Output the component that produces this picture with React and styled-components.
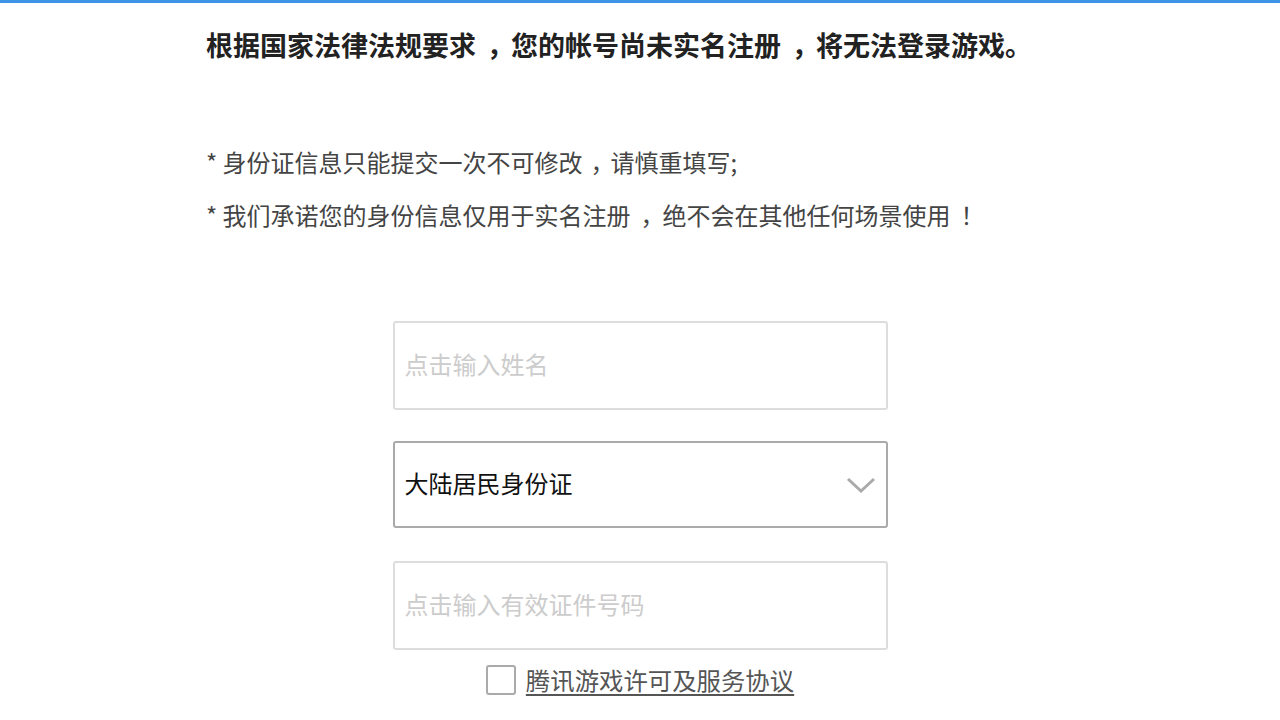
import React from "react";
import styled, { createGlobalStyle } from "styled-components";

const GlobalStyle = createGlobalStyle`
  html, body {
    margin: 0;
    padding: 0;
    background: #fff;
    font-family: "Noto Sans CJK SC", "Noto Sans", sans-serif;
    text-spacing-trim: space-all;
  }
`;

const TopBar = styled.div`
  height: 3px;
  background-color: #3d94e4;
`;

const Page = styled.div`
  width: 868px;
  margin: 0 auto;
  padding-top: 23px;
`;

const Title = styled.h1`
  margin: 0;
  font-size: 27px;
  font-weight: 700;
  line-height: 38px;
  color: #222;
`;

/* full-width punctuation, nudged to sit centred like the reference */
const Punct = styled.span`
  margin-left: calc(${(p) => p.$pad || 4}px + 0.25em);
  margin-right: ${(p) => p.$pad || 4}px;
  letter-spacing: -0.25em;
`;

const Notes = styled.div`
  margin-top: 80px;
  display: flex;
  flex-direction: column;
  gap: 18px;
`;

const Note = styled.p`
  margin: 0;
  font-size: 24px;
  line-height: 35px;
  color: #444;
`;

const Form = styled.div`
  margin-top: 89px;
  display: flex;
  flex-direction: column;
  align-items: center;
`;

const Field = styled.div`
  box-sizing: border-box;
  width: 495px;
  height: ${(p) => (p.$select ? "87px" : "89px")};
  margin-bottom: ${(p) => p.$gap || "0"};
  border: 2px solid ${(p) => (p.$select ? "#aaa" : "#ddd")};
  border-radius: 3px;
  display: flex;
  align-items: center;
  justify-content: space-between;
  padding: 0 10px 5px;
  font-size: 24px;
  color: ${(p) => (p.$select ? "#111" : "#ccc")};
`;

const Chevron = styled.svg`
  width: 30px;
  height: 18px;
  margin-top: 5px;
`;

const Agree = styled.label`
  margin-top: 12px;
  display: flex;
  align-items: center;
  gap: 10px;
`;

const Box = styled.span`
  box-sizing: border-box;
  width: 30px;
  height: 30px;
  border: 2px solid #aaa;
  border-radius: 3px;
`;

const Link = styled.a`
  font-size: 24.4px;
  color: #555;
  text-decoration: underline;
  text-underline-offset: 4px;
`;

export default function App() {
  return (
    <>
      <GlobalStyle />
      <TopBar />
      <Page>
        <Title>
          根据国家法律法规要求<Punct>，</Punct>您的帐号尚未实名注册
          <Punct>，</Punct>将无法登录游戏。
        </Title>
        <Notes>
          <Note>
            * 身份证信息只能提交一次不可修改<Punct $pad={2}>，</Punct>请慎重填写;
          </Note>
          <Note>
            * 我们承诺您的身份信息仅用于实名注册<Punct>，</Punct>绝不会在其他任何场景使用
            <Punct>！</Punct>
          </Note>
        </Notes>
        <Form>
          <Field $gap="31px">点击输入姓名</Field>
          <Field $select $gap="33px">
            <span>大陆居民身份证</span>
            <Chevron viewBox="0 0 30 18">
              <path d="M2 3 L15 15 L28 3" fill="none" stroke="#aaa" strokeWidth="3" />
            </Chevron>
          </Field>
          <Field>点击输入有效证件号码</Field>
          <Agree>
            <Box />
            <Link>腾讯游戏许可及服务协议</Link>
          </Agree>
        </Form>
      </Page>
    </>
  );
}
